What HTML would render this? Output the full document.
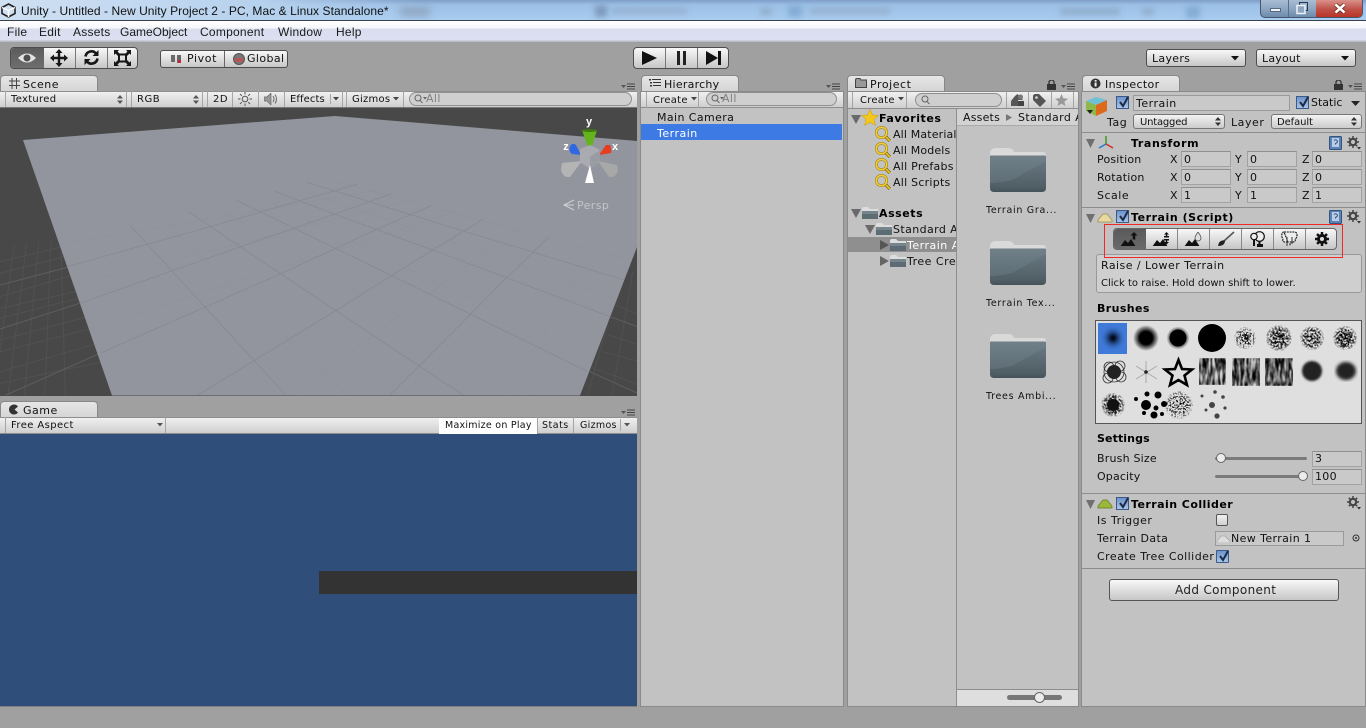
<!DOCTYPE html>
<html><head><meta charset="utf-8"><title>Unity</title>
<style>
html,body{margin:0;padding:0;width:1366px;height:728px;overflow:hidden;background:#a0a0a0}
*{box-sizing:border-box}
div,span.a,svg.a{position:absolute}
.t{position:absolute;white-space:nowrap;font:11px/18px "DejaVu Sans","Liberation Sans",sans-serif;letter-spacing:.3px;color:#111}
.b{font-weight:bold;color:#000;letter-spacing:.35px}
.m{font:12px/16px "Liberation Sans",sans-serif;letter-spacing:.25px;color:#1a1a1a;top:24px}
.tab{background:linear-gradient(#e6e6e6,#d4d4d4);border:1px solid #888;border-bottom:0;border-radius:4px 4px 0 0;height:17px;width:98px;top:75px}
.panel{background:#c2c2c2;border:1px solid #8a8a8a}
.tb{background:linear-gradient(#f0f0f0,#cfcfcf);height:17px;border-bottom:1px solid #8e8e8e}
.sep{width:1px;background:#a5a5a5;height:16px;top:91px}
.btn{background:linear-gradient(#f8f8f8,#c6c6c6);border:1px solid #4d4d4d}
.search{border:1px solid #8f8f8f;border-radius:8px;background:#cfcfcf;height:14px}
.f{background:#c9c9c9;border:1px solid #a2a2a2;border-top-color:#8f8f8f;height:16px;width:50px}
.dd{background:linear-gradient(#f2f2f2,#cbcbcb);border:1px solid #777;border-radius:3px;height:15px}
.hr{height:1px;background:#8c8c8c;left:1082px;width:283px}
.cb{width:13px;height:13px;background:linear-gradient(#6d94cc,#aac4e8);border:1px solid #3c5a88}
</style></head>
<body>
<svg width="0" height="0" style="position:absolute">
<defs>
<linearGradient id="fg" x1="0" y1="0" x2="0" y2="1"><stop offset="0" stop-color="#6e7d85"/><stop offset=".85" stop-color="#505e66"/><stop offset="1" stop-color="#46525a"/></linearGradient>
<symbol id="folder" viewBox="0 0 56 46">
<path d="M0 7Q0 1 6 1H18Q23 1 24 5H53Q56 5 56 9V12H0Z" fill="#dadada"/>
<path d="M0 9Q0 8.500 1 8.500H55Q56 8.500 56 9.500V41Q56 45 52 45H4Q0 45 0 41Z" fill="url(#fg)"/>
<path d="M0 9H56V14L22 33Q10 36 0 36Z" fill="#768890" opacity=".35"/>
</symbol>
<symbol id="sf" viewBox="0 0 16 14">
<path d="M0 3Q0 1 2 1H6L8 3H16V6H0Z" fill="#ddd"/>
<path d="M0 5H16V13H0Z" fill="#5d6b73"/><path d="M0 5H16V8H0Z" fill="#76858c"/>
</symbol>
<symbol id="mag" viewBox="0 0 16 16">
<path d="M10 10L15 15" stroke="#7a6210" stroke-width="3.200"/>
<path d="M10 10L15 15" stroke="#eec21c" stroke-width="1.800"/>
<circle cx="6.500" cy="6.500" r="5.200" fill="none" stroke="#8a7012" stroke-width="2.600"/>
<circle cx="6.500" cy="6.500" r="5.200" fill="none" stroke="#f4d030" stroke-width="1.600"/>
</symbol>
<symbol id="menu" viewBox="0 0 15 8">
<path d="M0 2H5L2.500 5Z" fill="#555"/><path d="M6 1H14M6 3.500H14M6 6H14" stroke="#444" stroke-width="1"/>
</symbol>
<symbol id="gear" viewBox="0 0 14 14">
<circle cx="6" cy="6" r="3.200" fill="none" stroke="#444" stroke-width="2.200"/>
<path d="M6 0V12M0 6H12M1.800 1.800L10.200 10.200M10.200 1.800L1.800 10.200" stroke="#444" stroke-width="1.500" stroke-dasharray="2 8"/>
<path d="M10 11H14L12 13.500Z" fill="#333"/>
</symbol>
<symbol id="book" viewBox="0 0 13 14">
<rect x=".5" y=".5" width="12" height="13" rx="1" fill="#5c82b5" stroke="#33527e"/>
<rect x="3" y="2" width="7" height="9" fill="#b9cde6"/>
<path d="M5 4.500Q6.500 3 8 4.500T6.500 7.500V8.500" stroke="#33527e" fill="none"/>
</symbol>
<symbol id="chk" viewBox="0 0 13 13">
<path d="M3 6L6 10L11 1" fill="none" stroke="#1c2c48" stroke-width="2"/>
</symbol>
<symbol id="mt" viewBox="0 0 18 12">
<path d="M0 12L5 5L8 8L11 4L16 12Z" fill="#111"/>
</symbol>
<filter id="sp1" x="0" y="0" width="100%" height="100%" color-interpolation-filters="sRGB"><feTurbulence type="fractalNoise" baseFrequency=".6" numOctaves="2" seed="3"/><feColorMatrix values="0 0 0 0 0 0 0 0 0 0 0 0 0 0 0 5 5 0 0 -4.900"/><feComposite in2="SourceGraphic" operator="in"/></filter>
<filter id="sp2" x="0" y="0" width="100%" height="100%" color-interpolation-filters="sRGB"><feTurbulence type="fractalNoise" baseFrequency=".5" numOctaves="2" seed="8"/><feColorMatrix values="0 0 0 0 0 0 0 0 0 0 0 0 0 0 0 5 5 0 0 -4.500"/><feComposite in2="SourceGraphic" operator="in"/></filter>
<filter id="sp3" x="0" y="0" width="100%" height="100%" color-interpolation-filters="sRGB"><feTurbulence type="fractalNoise" baseFrequency=".5 .08" numOctaves="3" seed="5"/><feColorMatrix values="0 0 0 0 0 0 0 0 0 0 0 0 0 0 0 2 2 0 0 -1.400"/><feComposite in2="SourceGraphic" operator="in"/><feGaussianBlur stdDeviation=".6"/></filter>
<filter id="bl1"><feGaussianBlur stdDeviation="1.600"/></filter>
<filter id="bl2"><feGaussianBlur stdDeviation="1"/></filter>
<radialGradient id="rg1"><stop offset="0" stop-color="#000"/><stop offset=".5" stop-color="#000"/><stop offset="1" stop-color="#000" stop-opacity="0"/></radialGradient>
<radialGradient id="rg0"><stop offset="0" stop-color="#000"/><stop offset=".2" stop-color="#0a1a38"/><stop offset="1" stop-color="#3d78d8" stop-opacity="0"/></radialGradient>
<radialGradient id="rs"><stop offset="0" stop-color="#000"/><stop offset=".7" stop-color="#000" stop-opacity=".85"/><stop offset="1" stop-color="#000" stop-opacity=".2"/></radialGradient>
<clipPath id="tc"><path d="M23 33L335 9L637 34V140L580 288.500H112Z"/></clipPath>
</defs>
</svg>

<!-- title bar -->
<div style="left:0;top:0;width:1366px;height:21px;background:linear-gradient(#7f9fc8 0,#9cc0e6 5px,#a9cdf0 100%);overflow:hidden;border-bottom:1px solid #39414e">
<div style="left:0;top:0;width:420px;height:20px;background:linear-gradient(90deg,#cfe0f2,#b7d2ee 60%,rgba(170,205,240,0))"></div>
<div style="left:400px;top:7px;width:30px;height:9px;background:#8ea5c0;filter:blur(4px)"></div>
<div style="left:595px;top:5px;width:12px;height:12px;background:#7f9abb;filter:blur(3px)"></div>
<div style="left:612px;top:8px;width:75px;height:6px;background:#94b0cf;filter:blur(3px)"></div>
<div style="left:760px;top:8px;width:12px;height:7px;background:#90aecd;filter:blur(3px)"></div>
<div style="left:788px;top:5px;width:14px;height:12px;background:#84acd5;filter:blur(3px)"></div>
<div style="left:810px;top:8px;width:80px;height:6px;background:#94b0cf;filter:blur(3px)"></div>
<div style="left:1060px;top:8px;width:60px;height:7px;background:#90aecd;filter:blur(3px)"></div>
<div style="left:1142px;top:8px;width:12px;height:7px;background:#90aecd;filter:blur(3px)"></div>
<div style="left:1186px;top:6px;width:14px;height:12px;background:#84acd5;filter:blur(3px)"></div>
</div>
<svg class="a" style="left:1px;top:3px" width="15" height="15" viewBox="0 0 15 15"><path d="M7.500 1L14 4.500V10.500L7.500 14L1 10.500V4.500Z" fill="none" stroke="#222" stroke-width="1.600"/><path d="M7.500 7.500L14 4.500M7.500 7.500V14M7.500 7.500L1 4.500" stroke="#fff" stroke-width="1.400"/></svg>
<div class="t" style="left:21px;top:3px;font:12px/16px 'Liberation Sans',sans-serif;letter-spacing:.06px;color:#111">Unity - Untitled - New Unity Project 2 - PC, Mac &amp; Linux Standalone*</div>
<!-- window controls -->
<div style="left:1260px;top:0;width:103px;height:18px;border:1px solid #46566e;border-top:0;border-radius:0 0 5px 5px;background:linear-gradient(#a9bdd4,#8ea6c2 50%,#6d8bac);overflow:hidden">
<div style="left:27px;top:0;width:1px;height:18px;background:#5a6d88"></div>
<div style="left:55px;top:0;width:47px;height:18px;background:linear-gradient(#d9918a,#c0524a 50%,#b83020)"></div>
<div style="left:9px;top:8px;width:11px;height:4px;background:#eef2f7;border:1px solid #55697f"></div>
<svg class="a" style="left:34px;top:2px" width="14" height="13"><rect x="4.500" y=".5" width="8" height="8" fill="none" stroke="#24384f"/><rect x="2" y="3.500" width="8" height="8" fill="#8aa6c4" stroke="#eef2f7" stroke-width="1.500"/></svg>
<svg class="a" style="left:72px;top:2px" width="14" height="13"><path d="M2.500 2.500L11.500 10.500M11.500 2.500L2.500 10.500" stroke="#5b1d14" stroke-width="4"/><path d="M2.500 2.500L11.500 10.500M11.500 2.500L2.500 10.500" stroke="#fff" stroke-width="2.600"/></svg>
</div>

<!-- menu bar -->
<div style="left:0;top:21px;width:1366px;height:21px;background:linear-gradient(#fff 0,#f6f7fb 7px,#dadeef 8px,#dcdff0 19px,#b9bcc6 20px)"></div>
<div class="t m" style="left:7px">File</div>
<div class="t m" style="left:39px">Edit</div>
<div class="t m" style="left:73px">Assets</div>
<div class="t m" style="left:120px;letter-spacing:0">GameObject</div>
<div class="t m" style="left:200px">Component</div>
<div class="t m" style="left:278px">Window</div>
<div class="t m" style="left:336px">Help</div>

<!-- toolbar: transform -->
<div class="btn" style="left:10px;top:47px;width:128px;height:22px;border-radius:4px;overflow:hidden">
<div style="left:0;top:0;width:33px;height:20px;background:linear-gradient(#5c5c5c,#6e6e6e)"></div>
<div style="left:64px;top:0;width:1px;height:20px;background:#777"></div>
<div style="left:96px;top:0;width:1px;height:20px;background:#777"></div>
</div>
<svg class="a" style="left:17px;top:50px" width="20" height="16" viewBox="0 0 20 16"><path d="M1 8Q10 -1 19 8Q10 17 1 8Z" fill="#e4e4e4"/><circle cx="10" cy="8" r="3.500" fill="#4e4e4e"/></svg>
<svg class="a" style="left:50px;top:49px" width="18" height="18" viewBox="0 0 18 18"><path d="M9 0L12.500 4H10.200V7.800H14V5.500L18 9L14 12.500V10.200H10.200V14H12.500L9 18L5.500 14H7.800V10.200H4V12.500L0 9L4 5.500V7.800H7.800V4H5.500Z" fill="#161616"/></svg>
<svg class="a" style="left:83px;top:49px" width="17" height="17" viewBox="0 0 17 17"><path d="M2.500 7.500A6 6 0 0 1 13 4.500" fill="none" stroke="#161616" stroke-width="2.600"/><path d="M15.500 1V7H9.500Z" fill="#161616"/><path d="M14.500 9.500A6 6 0 0 1 4 12.500" fill="none" stroke="#161616" stroke-width="2.600"/><path d="M1.500 16V10H7.500Z" fill="#161616"/></svg>
<svg class="a" style="left:113px;top:49px" width="19" height="18" viewBox="0 0 19 18"><rect x="6" y="5.500" width="7" height="7" fill="none" stroke="#161616" stroke-width="2"/><path d="M1 6V1H6L4.500 2.500L7 5L5 7L2.500 4.500ZM18 6V1H13L14.500 2.500L12 5L14 7L16.500 4.500ZM1 12V17H6L4.500 15.500L7 13L5 11L2.500 13.500ZM18 12V17H13L14.500 15.500L12 13L14 11L16.500 13.500Z" fill="#161616"/></svg>

<div class="btn" style="left:160px;top:50px;width:128px;height:18px;border-radius:3px"><div style="left:63px;top:0;width:1px;height:16px;background:#666"></div></div>
<svg class="a" style="left:171px;top:54px" width="11" height="10"><rect x="0" y="1" width="4" height="7" fill="#6a6a6a"/><rect x="6" y="1" width="4" height="8" fill="#666"/><rect x="7" y="6" width="3" height="3" fill="#c23"/></svg>
<div class="t" style="left:187px;top:50px;letter-spacing:.6px">Pivot</div>
<svg class="a" style="left:233px;top:53px" width="12" height="12"><circle cx="6" cy="6" r="5.500" fill="#777"/><path d="M2 5H10V9H2Z" fill="#b55"/><circle cx="6" cy="6" r="5.500" fill="none" stroke="#555"/></svg>
<div class="t" style="left:247px;top:50px;letter-spacing:.4px">Global</div>

<!-- play -->
<div class="btn" style="left:633px;top:47px;width:96px;height:22px;border-radius:4px"><div style="left:31px;top:0;width:1px;height:20px;background:#777"></div><div style="left:63px;top:0;width:1px;height:20px;background:#777"></div></div>
<svg class="a" style="left:641px;top:50px" width="16" height="16"><path d="M1 1L16 8L1 15Z" fill="#111"/></svg>
<svg class="a" style="left:676px;top:51px" width="11" height="14"><rect x="1" y="0" width="3" height="14" fill="#222"/><rect x="7" y="0" width="3" height="14" fill="#222"/></svg>
<svg class="a" style="left:705px;top:50px" width="17" height="16"><path d="M1 1L13 8L1 15Z" fill="#111"/><rect x="13" y="1" width="3" height="14" fill="#111"/></svg>

<!-- layers/layout -->
<div class="btn" style="left:1146px;top:49px;width:100px;height:18px;border-radius:3px"></div>
<div class="t" style="left:1152px;top:50px;letter-spacing:.3px">Layers</div>
<svg class="a" style="left:1231px;top:56px" width="8" height="5"><path d="M0 0H8L4 4.500Z" fill="#111"/></svg>
<div class="btn" style="left:1256px;top:49px;width:100px;height:18px;border-radius:3px"></div>
<div class="t" style="left:1262px;top:50px;letter-spacing:.2px">Layout</div>
<svg class="a" style="left:1341px;top:56px" width="8" height="5"><path d="M0 0H8L4 4.500Z" fill="#111"/></svg>

<!-- Scene panel -->
<div class="tab" style="left:0"></div>
<svg class="a" style="left:9px;top:78px" width="11" height="11"><path d="M3 0V11M7.500 0V11M0 3H11M0 7.500H11" stroke="#444"/></svg>
<div class="t" style="left:23px;top:76px;letter-spacing:.5px">Scene</div>
<svg class="a" style="left:621px;top:83px" width="15" height="8"><use href="#menu"/></svg>
<div class="tb" style="left:0;top:91px;width:637px;border-top:1px solid #8e8e8e"></div>
<div class="sep" style="left:5px"></div><div class="sep" style="left:126px"></div><div class="sep" style="left:131px"></div><div class="sep" style="left:202px"></div><div class="sep" style="left:207px"></div><div class="sep" style="left:232px"></div><div class="sep" style="left:258px"></div><div class="sep" style="left:284px"></div><div class="sep" style="left:330px;height:10px;top:94px"></div><div class="sep" style="left:342px"></div><div class="sep" style="left:346px"></div><div class="sep" style="left:403px"></div>
<div class="t" style="left:11px;top:91px;font-size:10px;letter-spacing:.3px">Textured</div>
<svg class="a" style="left:117px;top:95px" width="6" height="9"><path d="M0 3.500L3 0L6 3.500ZM0 5.500L3 9L6 5.500Z" fill="#555"/></svg>
<div class="t" style="left:137px;top:91px;font-size:10px;letter-spacing:.5px">RGB</div>
<svg class="a" style="left:193px;top:95px" width="6" height="9"><path d="M0 3.500L3 0L6 3.500ZM0 5.500L3 9L6 5.500Z" fill="#555"/></svg>
<div class="t" style="left:213px;top:91px;font-size:10px;letter-spacing:.5px">2D</div>
<svg class="a" style="left:238px;top:92px" width="14" height="14"><circle cx="7" cy="7" r="2.800" fill="none" stroke="#555"/><path d="M7 0V2.500M7 11.500V14M0 7H2.500M11.500 7H14M2 2L3.800 3.800M10.200 10.200L12 12M12 2L10.200 3.800M3.800 10.200L2 12" stroke="#555"/></svg>
<svg class="a" style="left:264px;top:93px" width="15" height="12"><path d="M0 4H3L7 0V12L3 8H0Z" fill="#999" stroke="#666" stroke-width=".7"/><path d="M9 3Q11 6 9 9M11 1.500Q14 6 11 10.500" fill="none" stroke="#666"/></svg>
<div class="t" style="left:290px;top:91px;font-size:10px;letter-spacing:.1px">Effects</div>
<svg class="a" style="left:333px;top:97px" width="6" height="4"><path d="M0 0H6L3 3.500Z" fill="#444"/></svg>
<div class="t" style="left:352px;top:91px;font-size:10px;letter-spacing:.25px">Gizmos</div>
<svg class="a" style="left:393px;top:97px" width="6" height="4"><path d="M0 0H6L3 3.500Z" fill="#444"/></svg>
<div class="search" style="left:409px;top:92px;width:223px"></div>
<svg class="a" style="left:414px;top:94px" width="14" height="10"><circle cx="4" cy="4" r="3" fill="none" stroke="#666"/><path d="M6 6.500L8.500 9" stroke="#666"/><path d="M9 3H13L11 5.500Z" fill="#666"/></svg>
<div class="t" style="left:426px;top:90px;color:#808080;letter-spacing:.4px">All</div>

<svg class="a" style="left:0;top:107px" width="637" height="289" viewBox="0 0 637 289">
<rect width="637" height="289" fill="#484848"/>
<g transform="translate(0,-2) scale(.40816,.33333)" fill="none">
<g stroke="#515151">
<path vector-effect="non-scaling-stroke" d="M0 470L155 425M0 505L160 455M0 575L178 510M0 610L185 560M0 640L190 580M0 705L215 635M0 740L225 670M0 800L240 715M0 835L255 770M35 420L-15 870M65 415L20 870M95 410L60 870M125 405L110 870M150 440L160 870M1510 600L1568 630M1490 690L1568 720M1475 740L1568 770M1455 790L1568 840M1530 470L1440 870M1550 500L1500 870"/>
</g>
<g stroke="#5e5e5e">
<path vector-effect="non-scaling-stroke" d="M0 540L165 487M0 672L195 595M15 870L245 745M1495 635L1568 668M1445 800L1568 868"/>
</g>
</g>
<path d="M23 33L335 9L637 34V140L580 288.500H112Z" fill="#92959e"/>
<g clip-path="url(#tc)">
<g transform="translate(0,-2) scale(.40816,.33333)" fill="none">
<g stroke="#8f929b" stroke-width=".7">
<path vector-effect="non-scaling-stroke" d="M395 340L850 870M520 300L1300 870M625 270L1490 780M712 245L1510 580M810 225L1560 470M950 250L135 420M1010 285L180 540M1120 320L220 670M1265 370L720 870M1450 440L1240 870"/>
</g>
<g stroke="#868892" stroke-width=".8">
<path vector-effect="non-scaling-stroke" d="M318 360L700 870M462 320L820 615L1135 870M578 285L960 512L1440 800M672 258L825 330L1060 435L1495 635M752 232L905 290L1135 378L1530 525"/>
<path vector-effect="non-scaling-stroke" d="M875 238L740 285L515 365L165 485M958 267L825 325L590 425L195 595M1060 300L925 372L690 505L245 745M1185 342L1060 435L825 615L485 870M1345 395L1240 520L1025 785L955 870"/>
</g>
</g>
</g>
<rect x="0" y="0" width="637" height="1" fill="#777"/>
<!-- gizmo -->
<g transform="translate(0,-107)">
<text x="589" y="125" font-family="Liberation Sans,sans-serif" font-weight="bold" font-size="11" fill="#fff" text-anchor="middle">y</text>
<text x="566" y="150" font-family="Liberation Sans,sans-serif" font-weight="bold" font-size="11" fill="#fff" text-anchor="middle">z</text>
<text x="615" y="150" font-family="Liberation Sans,sans-serif" font-weight="bold" font-size="11" fill="#fff" text-anchor="middle">x</text>
<path d="M582 130H597L590 153Z" fill="#64b41e"/><ellipse cx="589.500" cy="130.500" rx="7.500" ry="1.500" fill="#3f7a10"/>
<path d="M570 146Q573 142 576 145L581 155L572 154Q568 151 570 146Z" fill="#2f68e0"/>
<path d="M610 145Q612 149 611 153L599 155L606 145Z" fill="#e63c20"/>
<path d="M580 149L590 145L600 150V162L590 169L580 162Z" fill="#a9abb1"/>
<path d="M590 157L600 150V162L590 169Z" fill="#9a9ca3"/>
<path d="M562 163L582 161L570 177Q563 178 561 170Z" fill="#b4b4b4"/>
<path d="M617 165L598 161L609 177Q616 178 618 170Z" fill="#a8a8a8"/>
<path d="M590 165L594 183H585Z" fill="#fff"/>
<path d="M574 200L564 205L574 210" fill="none" stroke="#cfd1d6"/><path d="M574 205H564" stroke="#cfd1d6"/>
<text x="577" y="209" font-family="DejaVu Sans,sans-serif" font-size="11" fill="#c3c5ca" letter-spacing=".4">Persp</text>
</g>
</svg>

<!-- Game panel -->
<div class="tab" style="left:0;top:401px"></div>
<svg class="a" style="left:9px;top:404px" width="10" height="11"><path d="M9 2.500A5 5 0 1 0 9 8.500L5.500 5.500Z" fill="#333"/></svg>
<div class="t" style="left:23px;top:402px;letter-spacing:.5px">Game</div>
<svg class="a" style="left:621px;top:409px" width="15" height="8"><use href="#menu"/></svg>
<div class="tb" style="left:0;top:417px;width:637px;border-top:1px solid #8e8e8e"></div>
<div class="sep" style="left:5px;top:417px"></div><div class="sep" style="left:165px;top:417px"></div>
<div class="t" style="left:11px;top:417px;font-size:10px;letter-spacing:.4px">Free Aspect</div>
<svg class="a" style="left:157px;top:423px" width="6" height="4"><path d="M0 0H6L3 3.500Z" fill="#555"/></svg>
<div style="left:439px;top:418px;width:98px;height:16px;background:#fff"></div>
<div class="t" style="left:445px;top:417px;font-size:9.500px;letter-spacing:.25px">Maximize on Play</div>
<div class="sep" style="left:537px;top:417px"></div>
<div class="t" style="left:542px;top:417px;font-size:9.500px;letter-spacing:.5px">Stats</div>
<div class="sep" style="left:573px;top:417px"></div>
<div class="t" style="left:580px;top:417px;font-size:9.500px;letter-spacing:.3px">Gizmos</div>
<div class="sep" style="left:620px;top:419px;height:12px"></div>
<svg class="a" style="left:624px;top:423px" width="6" height="4"><path d="M0 0H6L3 3.500Z" fill="#555"/></svg>
<div style="left:0;top:434px;width:637px;height:272px;background:#2f4e7a"></div>
<div style="left:319px;top:571px;width:318px;height:23px;background:#333"></div>
<div style="left:0;top:706px;width:637px;height:1px;background:#808080"></div>

<!-- Hierarchy -->
<div class="tab" style="left:641px"></div>
<svg class="a" style="left:649px;top:78px" width="12" height="9"><path d="M3 1.500H12M4 4.500H12M4 7.500H12" stroke="#333"/><path d="M0 1H2V2.500H0ZM1 4H3V5.500H1ZM1 7H3V8.500H1Z" fill="#333"/></svg>
<div class="t" style="left:664px;top:76px;letter-spacing:.25px">Hierarchy</div>
<svg class="a" style="left:826px;top:83px" width="15" height="8"><use href="#menu"/></svg>
<div class="panel" style="left:640px;top:91px;width:204px;height:616px"></div>
<div class="tb" style="left:641px;top:92px;width:202px;height:16px"></div>
<div class="sep" style="left:646px;top:92px"></div><div class="sep" style="left:698px;top:92px"></div>
<div class="t" style="left:653px;top:92px;font-size:10px;letter-spacing:.25px">Create</div>
<svg class="a" style="left:691px;top:97px" width="6" height="4"><path d="M0 0H6L3 3.500Z" fill="#444"/></svg>
<div class="search" style="left:706px;top:92px;width:131px"></div>
<svg class="a" style="left:711px;top:94px" width="14" height="10"><circle cx="4" cy="4" r="3" fill="none" stroke="#666"/><path d="M6 6.500L8.500 9" stroke="#666"/><path d="M9 3H13L11 5.500Z" fill="#666"/></svg>
<div class="t" style="left:722px;top:90px;color:#808080;letter-spacing:.4px">All</div>
<div class="t" style="left:657px;top:109px;letter-spacing:.4px">Main Camera</div>
<div style="left:641px;top:124px;width:201px;height:16px;background:#3d7ae4"></div>
<div class="t" style="left:657px;top:125px;color:#fff;letter-spacing:.5px">Terrain</div>

<!-- Project -->
<div class="tab" style="left:847px"></div>
<svg class="a" style="left:855px;top:78px" width="12" height="10"><path d="M.5 9.500V2Q.5 .5 2 .5H5L6 2H11.500V9.500Z" fill="#999" stroke="#444"/></svg>
<div class="t" style="left:870px;top:76px;letter-spacing:.55px">Project</div>
<svg class="a" style="left:1047px;top:80px" width="10" height="10"><rect x="0" y="4" width="9" height="6" fill="#333"/><path d="M2 4.500V2.500A2.500 2.500 0 0 1 7 2.500V4.500" fill="none" stroke="#333" stroke-width="1.300"/></svg>
<svg class="a" style="left:1061px;top:83px" width="15" height="8"><use href="#menu"/></svg>
<div class="panel" style="left:847px;top:91px;width:232px;height:616px"></div>
<div class="tb" style="left:848px;top:92px;width:230px;height:17px"></div>
<div class="sep" style="left:852px;top:92px"></div><div class="sep" style="left:906px;top:92px"></div><div class="sep" style="left:1006px;top:92px"></div><div class="sep" style="left:1028px;top:92px"></div><div class="sep" style="left:1051px;top:92px"></div><div class="sep" style="left:1073px;top:92px"></div>
<div class="t" style="left:860px;top:92px;font-size:10px;letter-spacing:.25px">Create</div>
<svg class="a" style="left:898px;top:97px" width="6" height="4"><path d="M0 0H6L3 3.500Z" fill="#444"/></svg>
<div class="search" style="left:915px;top:93px;width:87px"></div>
<svg class="a" style="left:921px;top:95px" width="10" height="10"><circle cx="4" cy="4" r="3" fill="none" stroke="#666"/><path d="M6 6.500L8.500 9" stroke="#666"/></svg>
<svg class="a" style="left:1011px;top:94px" width="13" height="12"><path d="M6.500 0L12 6H7V12H0V7L4 2Z" fill="#555"/><circle cx="9.500" cy="3" r="2.500" fill="#777"/><rect x="7" y="7" width="6" height="5" fill="#444"/></svg>
<svg class="a" style="left:1033px;top:94px" width="13" height="13"><path d="M0 1.500L1.500 0H6L13 7L7 13L0 6Z" fill="#555"/><circle cx="3.500" cy="3.500" r="1.300" fill="#ddd"/></svg>
<svg class="a" style="left:1055px;top:94px" width="13" height="12"><path d="M6.500 0L8.300 4.300L13 4.700L9.400 7.700L10.500 12L6.500 9.700L2.500 12L3.600 7.700L0 4.700L4.700 4.300Z" fill="#999"/></svg>
<div style="left:848px;top:109px;width:108px;height:597px;background:#c2c2c2;overflow:hidden">
<svg class="a" style="left:3px;top:6px" width="10" height="9"><path d="M0 0H10L5 9Z" fill="#6a6a6a"/></svg>
<svg class="a" style="left:13px;top:0" width="18" height="17"><path d="M9 0L11.500 6L17.500 6.500L13 10.500L14.500 16.500L9 13.300L3.500 16.500L5 10.500L.5 6.500L6.500 6Z" fill="#f2c81c" stroke="#c59a10" stroke-width=".5"/></svg>
<div class="t b" style="left:31px;top:1px;letter-spacing:.55px">Favorites</div>
<svg class="a" style="left:27px;top:17px" width="16" height="16"><use href="#mag"/></svg><div class="t" style="left:45px;top:17px;letter-spacing:.15px">All Materials</div>
<svg class="a" style="left:27px;top:33px" width="16" height="16"><use href="#mag"/></svg><div class="t" style="left:45px;top:33px;letter-spacing:.15px">All Models</div>
<svg class="a" style="left:27px;top:49px" width="16" height="16"><use href="#mag"/></svg><div class="t" style="left:45px;top:49px;letter-spacing:.25px">All Prefabs</div>
<svg class="a" style="left:27px;top:65px" width="16" height="16"><use href="#mag"/></svg><div class="t" style="left:45px;top:65px;letter-spacing:.25px">All Scripts</div>
<svg class="a" style="left:3px;top:100px" width="10" height="9"><path d="M0 0H10L5 9Z" fill="#6a6a6a"/></svg>
<svg class="a" style="left:14px;top:97px" width="16" height="14"><use href="#sf"/></svg>
<div class="t b" style="left:31px;top:96px;letter-spacing:.55px">Assets</div>
<svg class="a" style="left:17px;top:116px" width="10" height="9"><path d="M0 0H10L5 9Z" fill="#6a6a6a"/></svg>
<svg class="a" style="left:28px;top:113px" width="16" height="14"><use href="#sf"/></svg>
<div class="t" style="left:45px;top:112px;letter-spacing:.4px">Standard Assets</div>
<div style="left:0;top:128px;width:108px;height:15px;background:#8f8f8f"></div>
<svg class="a" style="left:32px;top:131px" width="9" height="10"><path d="M0 0L9 5L0 10Z" fill="#555"/></svg>
<svg class="a" style="left:42px;top:129px" width="16" height="14"><use href="#sf"/></svg>
<div class="t" style="left:59px;top:128px;color:#fff;letter-spacing:.5px">Terrain Assets</div>
<svg class="a" style="left:32px;top:147px" width="9" height="10"><path d="M0 0L9 5L0 10Z" fill="#666"/></svg>
<svg class="a" style="left:42px;top:145px" width="16" height="14"><use href="#sf"/></svg>
<div class="t" style="left:59px;top:144px;letter-spacing:.5px">Tree Creator</div>
</div>
<div style="left:956px;top:109px;width:1px;height:597px;background:#8e8e8e"></div>
<div style="left:957px;top:109px;width:121px;height:17px;background:#d2d2d2;overflow:hidden;border-bottom:1px solid #aaa">
<div class="t" style="left:6px;top:0;letter-spacing:.2px">Assets</div>
<svg class="a" style="left:49px;top:5px" width="6" height="7"><path d="M0 0L6 3.500L0 7Z" fill="#777"/></svg>
<div class="t" style="left:61px;top:0;letter-spacing:.4px">Standard Assets</div>
</div>
<svg class="a" style="left:990px;top:147px" width="56" height="46"><use href="#folder"/></svg>
<div class="t" style="left:986px;top:202px;font-size:9.500px;letter-spacing:.7px">Terrain Gra...</div>
<svg class="a" style="left:990px;top:240px" width="56" height="46"><use href="#folder"/></svg>
<div class="t" style="left:986px;top:295px;font-size:9.500px;letter-spacing:.7px">Terrain Tex...</div>
<svg class="a" style="left:990px;top:333px" width="56" height="46"><use href="#folder"/></svg>
<div class="t" style="left:986px;top:388px;font-size:9.500px;letter-spacing:.7px">Trees Ambi...</div>
<div style="left:957px;top:689px;width:121px;height:17px;background:#dedede;border-top:1px solid #8e8e8e"></div>
<div style="left:1007px;top:695px;width:55px;height:5px;border-radius:3px;background:#777"></div>
<div style="left:1034px;top:692px;width:11px;height:11px;border-radius:50%;background:#ececec;border:1px solid #666"></div>

<!-- Inspector -->
<div class="tab" style="left:1082px"></div>
<svg class="a" style="left:1090px;top:78px" width="11" height="11"><circle cx="5.500" cy="5.500" r="5" fill="#333"/><rect x="4.600" y="4.500" width="2" height="4" fill="#eee"/><rect x="4.600" y="2" width="2" height="1.600" fill="#eee"/></svg>
<div class="t" style="left:1105px;top:76px;letter-spacing:.35px">Inspector</div>
<svg class="a" style="left:1334px;top:80px" width="10" height="10"><rect x="0" y="4" width="9" height="6" fill="#333"/><path d="M2 4.500V2.500A2.500 2.500 0 0 1 7 2.500V4.500" fill="none" stroke="#333" stroke-width="1.300"/></svg>
<svg class="a" style="left:1348px;top:83px" width="15" height="8"><use href="#menu"/></svg>
<div class="panel" style="left:1081px;top:91px;width:285px;height:616px"></div>
<svg class="a" style="left:1085px;top:96px" width="23" height="22" viewBox="0 0 23 22"><path d="M1 5L11 1L22 4L11 9Z" fill="#6fc0d6"/><path d="M1 5L11 9V20L1 15Z" fill="#8fb84a"/><path d="M11 9L22 4V15L11 20Z" fill="#dd6a1a"/><path d="M2 14H8L5 18Z" fill="#222"/></svg>
<div class="cb" style="left:1116px;top:96px"><svg class="a" style="left:0;top:-1px" width="13" height="13"><use href="#chk"/></svg></div>
<div style="left:1133px;top:95px;width:157px;height:16px;background:#c9c9c9;border:1px solid #9a9a9a"></div>
<div class="t" style="left:1136px;top:95px;letter-spacing:.5px">Terrain</div>
<div class="cb" style="left:1296px;top:96px"><svg class="a" style="left:0;top:-1px" width="13" height="13"><use href="#chk"/></svg></div>
<div class="t" style="left:1311px;top:94px;letter-spacing:0">Static</div>
<svg class="a" style="left:1351px;top:101px" width="9" height="5"><path d="M0 0H9L4.500 5Z" fill="#222"/></svg>
<div class="t" style="left:1107px;top:114px;letter-spacing:.55px">Tag</div>
<div class="dd" style="left:1133px;top:114px;width:92px"></div>
<div class="t" style="left:1140px;top:114px;font-size:10px;letter-spacing:-.2px">Untagged</div>
<svg class="a" style="left:1215px;top:117px" width="6" height="9"><path d="M0 3.500L3 0L6 3.500ZM0 5.500L3 9L6 5.500Z" fill="#333"/></svg>
<div class="t" style="left:1231px;top:114px;letter-spacing:.55px">Layer</div>
<div class="dd" style="left:1271px;top:114px;width:91px"></div>
<div class="t" style="left:1277px;top:114px;font-size:10px;letter-spacing:-.1px">Default</div>
<svg class="a" style="left:1351px;top:117px" width="6" height="9"><path d="M0 3.500L3 0L6 3.500ZM0 5.500L3 9L6 5.500Z" fill="#333"/></svg>
<div class="hr" style="top:132px"></div>

<svg class="a" style="left:1086px;top:139px" width="9" height="9"><path d="M0 0H9L4.500 9Z" fill="#6f6f6f"/></svg>
<svg class="a" style="left:1098px;top:135px" width="16" height="15"><path d="M8 9V1" stroke="#3a9a1a" stroke-width="1.500"/><path d="M8 9L1 13" stroke="#1a7fd0" stroke-width="1.500"/><path d="M8 9L15 13" stroke="#d03020" stroke-width="1.500"/></svg>
<div class="t b" style="left:1131px;top:135px;letter-spacing:.6px">Transform</div>
<svg class="a" style="left:1329px;top:136px" width="13" height="14"><use href="#book"/></svg>
<svg class="a" style="left:1347px;top:136px" width="14" height="14"><use href="#gear"/></svg>
<div class="t" style="left:1097px;top:151px;letter-spacing:.2px">Position</div>
<div class="t" style="left:1097px;top:169px;letter-spacing:.2px">Rotation</div>
<div class="t" style="left:1097px;top:187px;letter-spacing:.5px">Scale</div>

<div class="f" style="left:1181px;top:151px"></div><div class="t" style="left:1170px;top:151px">X</div><div class="t" style="left:1184px;top:151px">0</div>
<div class="f" style="left:1247px;top:151px"></div><div class="t" style="left:1235px;top:151px">Y</div><div class="t" style="left:1250px;top:151px">0</div>
<div class="f" style="left:1312px;top:151px"></div><div class="t" style="left:1302px;top:151px">Z</div><div class="t" style="left:1315px;top:151px">0</div>
<div class="f" style="left:1181px;top:169px"></div><div class="t" style="left:1170px;top:169px">X</div><div class="t" style="left:1184px;top:169px">0</div>
<div class="f" style="left:1247px;top:169px"></div><div class="t" style="left:1235px;top:169px">Y</div><div class="t" style="left:1250px;top:169px">0</div>
<div class="f" style="left:1312px;top:169px"></div><div class="t" style="left:1302px;top:169px">Z</div><div class="t" style="left:1315px;top:169px">0</div>
<div class="f" style="left:1181px;top:187px"></div><div class="t" style="left:1170px;top:187px">X</div><div class="t" style="left:1184px;top:187px">1</div>
<div class="f" style="left:1247px;top:187px"></div><div class="t" style="left:1235px;top:187px">Y</div><div class="t" style="left:1250px;top:187px">1</div>
<div class="f" style="left:1312px;top:187px"></div><div class="t" style="left:1302px;top:187px">Z</div><div class="t" style="left:1315px;top:187px">1</div>
<div class="hr" style="top:207px"></div>

<svg class="a" style="left:1086px;top:214px" width="9" height="9"><path d="M0 0H9L4.500 9Z" fill="#6f6f6f"/></svg>
<svg class="a" style="left:1097px;top:212px" width="16" height="11"><path d="M1 8L6 2H10L15 8V10H1Z" fill="#e8d9a0" stroke="#998a50" stroke-width=".7"/></svg>
<div class="cb" style="left:1116px;top:210px"><svg class="a" style="left:0;top:-1px" width="13" height="13"><use href="#chk"/></svg></div>
<div class="t b" style="left:1131px;top:209px;letter-spacing:.55px">Terrain (Script)</div>
<svg class="a" style="left:1329px;top:210px" width="13" height="14"><use href="#book"/></svg>
<svg class="a" style="left:1347px;top:210px" width="14" height="14"><use href="#gear"/></svg>

<!-- help -->
<div style="left:1096px;top:254px;width:266px;height:39px;background:#cfcfcf;border:1px solid #999;border-radius:3px"></div>
<div class="t" style="left:1101px;top:257px;letter-spacing:.45px">Raise / Lower Terrain</div>
<div class="t" style="left:1101px;top:275px;font-size:10px;letter-spacing:0">Click to raise. Hold down shift to lower.</div>
<!-- terrain tools -->
<div class="btn" style="left:1113px;top:228px;width:224px;height:22px;border-radius:4px;overflow:hidden;border-color:#666">
<div style="left:0;top:0;width:32px;height:20px;background:linear-gradient(#5a5a5a,#6a6a6a)"></div>
<div style="left:63px;top:0;width:1px;height:20px;background:#888"></div><div style="left:95px;top:0;width:1px;height:20px;background:#888"></div><div style="left:127px;top:0;width:1px;height:20px;background:#888"></div><div style="left:159px;top:0;width:1px;height:20px;background:#888"></div><div style="left:191px;top:0;width:1px;height:20px;background:#888"></div>
</div>
<svg class="a" style="left:1120px;top:232px" width="18" height="14"><use href="#mt" y="2"/><path d="M14 0L17.500 3.500H15.300V7.500H12.700V3.500H10.500Z" fill="#111"/></svg>
<svg class="a" style="left:1152px;top:232px" width="18" height="14"><use href="#mt" y="2"/><path d="M14.500 0L17 2.500H15.200V4H17V5.500H12V4H13.800V2.500H12ZM12 7H17V8.500H15.200V10H17L14.500 12.500L12 10H13.800V8.500H12Z" fill="#111"/></svg>
<svg class="a" style="left:1184px;top:232px" width="18" height="14"><use href="#mt" y="2"/><path d="M14 0Q17 4 17 6A3 3 0 0 1 11 6Q11 4 14 0Z" fill="#ddd" stroke="#444" stroke-width=".7"/></svg>
<svg class="a" style="left:1217px;top:231px" width="18" height="16"><path d="M17 1L7 10" stroke="#555" stroke-width="1.600"/><path d="M8 9.500Q2 8.500 1 15Q8 15 8 9.500Z" fill="#222"/></svg>
<svg class="a" style="left:1250px;top:231px" width="16" height="16"><circle cx="9.500" cy="5.500" r="4.800" fill="#eee" stroke="#111" stroke-width="1.200"/><circle cx="4" cy="5.500" r="3.200" fill="#eee" stroke="#111" stroke-width="1.200"/><path d="M4 9V15M9.500 10V15" stroke="#111" stroke-width="2"/><path d="M7 13H13V16H7Z" fill="#111"/></svg>
<svg class="a" style="left:1281px;top:231px" width="17" height="16"><path d="M3 1H13Q16 1 16 4Q16 7 14 8Q15 11 12 11H9V15M7 11H4Q1 11 2 8Q0 5 1 3Q1 1 3 1Z" fill="#eee" stroke="#111" stroke-width="1.100" stroke-dasharray="2 .8"/><path d="M6 6V15M11 6V13" stroke="#333"/></svg>
<svg class="a" style="left:1315px;top:232px" width="14" height="14" viewBox="0 0 16 16"><circle cx="8" cy="8" r="4" fill="none" stroke="#111" stroke-width="3.400"/><path d="M8 0V16M0 8H16M2.300 2.300L13.700 13.700M13.700 2.300L2.300 13.700" stroke="#111" stroke-width="2.800" stroke-dasharray="3 10"/></svg>
<div style="left:1104px;top:224px;width:239px;height:34px;border:1px solid #f02828"></div>

<div class="t b" style="left:1097px;top:300px;letter-spacing:.4px">Brushes</div>
<!-- brushes -->
<svg class="a" style="left:1095px;top:320px" width="267" height="104" viewBox="0 0 267 104">
<rect x=".5" y=".5" width="266" height="103" fill="#dfdfdf" stroke="#555"/>
<rect x="3" y="3" width="29" height="31" fill="#3f7ad8"/>
<circle cx="18" cy="18" r="13" fill="url(#rg0)"/>
<circle cx="51" cy="18" r="13" fill="url(#rg1)"/>
<circle cx="83" cy="18" r="11.500" fill="url(#rg1)"/><circle cx="83" cy="18" r="8.500" fill="#000"/>
<circle cx="117" cy="18" r="14" fill="#000"/>
<circle cx="150" cy="18" r="11" fill="url(#rs)" filter="url(#sp1)"/><circle cx="150" cy="18" r="4" fill="#000" filter="url(#sp2)"/>
<circle cx="184" cy="18" r="13" fill="url(#rs)" filter="url(#sp2)"/><circle cx="184" cy="18" r="6" fill="#000" filter="url(#sp1)"/>
<circle cx="217" cy="18" r="12" fill="url(#rs)" filter="url(#sp2)"/>
<circle cx="250" cy="18" r="12" fill="url(#rs)" filter="url(#sp2)"/><circle cx="250" cy="19" r="7" fill="#000" filter="url(#sp1)"/>
<g fill="none" stroke="#333" stroke-width=".8">
<circle cx="19" cy="52" r="10"/><circle cx="14" cy="47" r="5"/><circle cx="25" cy="46" r="5"/><circle cx="26" cy="57" r="5"/><circle cx="13" cy="58" r="5"/>
</g><circle cx="19" cy="52" r="7" fill="#222"/>
<path d="M51 41L51 63M41 46L62 59M41 59L62 46" stroke="#aaa" stroke-width="1" fill="none"/><circle cx="51" cy="52" r="1.800" fill="#222"/>
<path d="M83.500 40L87 49L97 49.500L89.500 55.500L92 65L83.500 60L75 65L77.500 55.500L70 49.500L80 49Z" fill="none" stroke="#000" stroke-width="2.600"/>
<rect x="104" y="38" width="27" height="27" fill="#777" filter="url(#sp3)"/>
<rect x="137" y="38" width="28" height="28" fill="#333" filter="url(#sp3)"/>
<rect x="170" y="38" width="28" height="28" fill="#222" filter="url(#sp3)"/>
<circle cx="217" cy="51" r="10" fill="#222" filter="url(#bl2)"/>
<ellipse cx="251" cy="51" rx="10" ry="9" fill="#222" filter="url(#bl1)"/>
<circle cx="18" cy="85" r="12" fill="url(#rs)" filter="url(#sp2)"/><circle cx="18" cy="85" r="6" fill="#111"/>
<g fill="#000"><circle cx="51" cy="85" r="5"/><circle cx="63" cy="75" r="3.500"/><circle cx="52" cy="74" r="2.500"/><circle cx="41" cy="79" r="2"/><circle cx="69" cy="84" r="3"/><circle cx="61" cy="88" r="2.500"/><circle cx="49" cy="93" r="2"/><circle cx="59" cy="95" r="3.500"/><circle cx="67" cy="94" r="2"/></g>
<circle cx="84" cy="85" r="14" fill="url(#rs)" filter="url(#sp1)"/>
<g fill="#444"><circle cx="117" cy="85" r="3"/><circle cx="128" cy="77" r="1.800"/><circle cx="107" cy="76" r="1.500"/><circle cx="122" cy="96" r="2.600"/><circle cx="111" cy="90" r="1.500"/><circle cx="130" cy="88" r="1.600"/><circle cx="120" cy="72" r="1.800"/></g>
</svg>

<div class="t b" style="left:1097px;top:430px;letter-spacing:.1px">Settings</div>
<div class="t" style="left:1097px;top:450px;letter-spacing:.2px">Brush Size</div>
<div style="left:1215px;top:457px;width:92px;height:3px;background:#7a7a7a;border-radius:2px"></div>
<div style="left:1216px;top:453px;width:10px;height:10px;border-radius:50%;background:#ececec;border:1px solid #666"></div>
<div class="f" style="left:1312px;top:451px"></div><div class="t" style="left:1315px;top:450px;letter-spacing:.5px">3</div>
<div class="t" style="left:1097px;top:468px;letter-spacing:.15px">Opacity</div>
<div style="left:1215px;top:475px;width:92px;height:3px;background:#7a7a7a;border-radius:2px"></div>
<div style="left:1298px;top:471px;width:10px;height:10px;border-radius:50%;background:#ececec;border:1px solid #666"></div>
<div class="f" style="left:1312px;top:469px"></div><div class="t" style="left:1315px;top:468px;letter-spacing:.3px">100</div>
<div class="hr" style="top:493px"></div>

<svg class="a" style="left:1086px;top:500px" width="9" height="9"><path d="M0 0H9L4.500 9Z" fill="#6f6f6f"/></svg>
<svg class="a" style="left:1097px;top:498px" width="16" height="11"><path d="M1 8L6 2H10L15 8V10H1Z" fill="#9ab83a" stroke="#667a20" stroke-width=".7"/></svg>
<div class="cb" style="left:1116px;top:497px"><svg class="a" style="left:0;top:-1px" width="13" height="13"><use href="#chk"/></svg></div>
<div class="t b" style="left:1131px;top:496px;letter-spacing:.45px">Terrain Collider</div>
<svg class="a" style="left:1347px;top:496px" width="14" height="14"><use href="#gear"/></svg>
<div class="t" style="left:1097px;top:512px;letter-spacing:.5px">Is Trigger</div>
<div style="left:1216px;top:514px;width:12px;height:12px;background:linear-gradient(#f0f0f0,#d0d0d0);border:1px solid #555;border-radius:2px"></div>
<div class="t" style="left:1097px;top:530px;letter-spacing:.35px">Terrain Data</div>
<div style="left:1215px;top:531px;width:129px;height:15px;background:#c9c9c9;border:1px solid #9a9a9a"></div>
<svg class="a" style="left:1217px;top:534px" width="13" height="9"><path d="M0 7L4 2H8L13 7V9H0Z" fill="#ddd" stroke="#999" stroke-width=".6"/></svg>
<div class="t" style="left:1231px;top:530px;letter-spacing:.4px">New Terrain 1</div>
<svg class="a" style="left:1352px;top:534px" width="8" height="8"><circle cx="4" cy="4" r="3" fill="none" stroke="#333"/><circle cx="4" cy="4" r="1" fill="#333"/></svg>
<div class="t" style="left:1097px;top:548px;letter-spacing:.45px">Create Tree Collider</div>
<div class="cb" style="left:1216px;top:550px;border-radius:1px"><svg class="a" style="left:0;top:-1px" width="13" height="13"><use href="#chk"/></svg></div>
<div class="hr" style="top:568px"></div>
<div class="btn" style="left:1109px;top:579px;width:230px;height:22px;border-radius:3px;border-color:#555"></div>
<div class="t" style="left:1175px;top:581px;font-size:12px;letter-spacing:.35px;color:#222">Add Component</div>
</body></html>
